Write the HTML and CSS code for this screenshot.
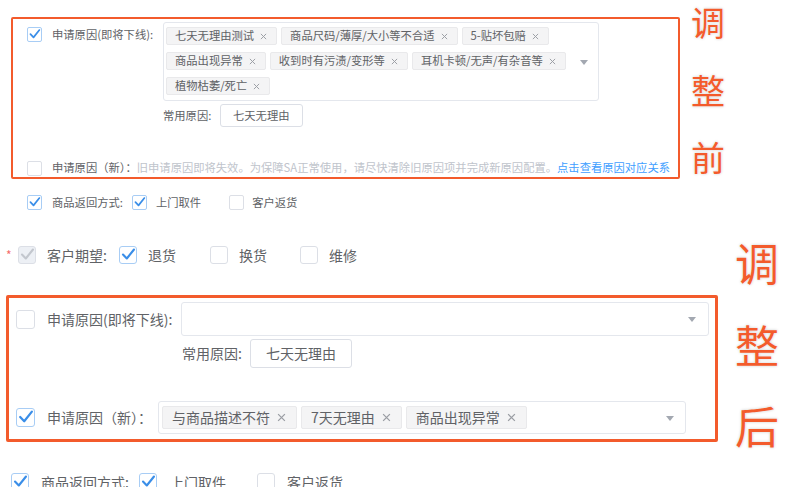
FILE: index.html
```html
<!DOCTYPE html>
<html lang="zh-CN">
<head>
<meta charset="utf-8">
<title>申请原因调整前后</title>
<link rel="stylesheet" href="styles.css">
</head>
<body>
<div class="page">
  <section class="sec-before">
    <div class="box box-before">
      <div class="field">
        <div class="head head-s">
          <span class="cb cb-s checked"><svg viewBox="0 0 16 16"><path d="M3 7.5 L6.8 11.5 L14 2.5"/></svg></span>
          <span class="lbl">申请原因(即将下线):</span>
        </div>
        <div class="select select-s">
          <span class="tag tag-s">七天无理由测试<svg class="x" viewBox="0 0 8 8"><path d="M1 1L7 7M7 1L1 7"/></svg></span>
          <span class="tag tag-s">商品尺码/薄厚/大小等不合适<svg class="x" viewBox="0 0 8 8"><path d="M1 1L7 7M7 1L1 7"/></svg></span>
          <span class="tag tag-s">5-贴坏包赔<svg class="x" viewBox="0 0 8 8"><path d="M1 1L7 7M7 1L1 7"/></svg></span>
          <span class="tag tag-s">商品出现异常<svg class="x" viewBox="0 0 8 8"><path d="M1 1L7 7M7 1L1 7"/></svg></span>
          <span class="tag tag-s">收到时有污渍/变形等<svg class="x" viewBox="0 0 8 8"><path d="M1 1L7 7M7 1L1 7"/></svg></span>
          <span class="tag tag-s">耳机卡顿/无声/有杂音等<svg class="x" viewBox="0 0 8 8"><path d="M1 1L7 7M7 1L1 7"/></svg></span>
          <span class="tag tag-s">植物枯萎/死亡<svg class="x" viewBox="0 0 8 8"><path d="M1 1L7 7M7 1L1 7"/></svg></span>
          <i class="arrow"></i>
        </div>
      </div>
      <div class="common common-s">
        <span class="lbl">常用原因:</span>
        <span class="btn btn-s">七天无理由</span>
      </div>
      <div class="field-new">
        <span class="cb cb-s"><svg viewBox="0 0 16 16"><path d="M3 7.5 L6.8 11.5 L14 2.5"/></svg></span>
        <span class="txt">申请原因（新）：<span class="hint">旧申请原因即将失效。为保障SA正常使用，请尽快清除旧原因项并完成新原因配置。</span><a class="link">点击查看原因对应关系</a></span>
      </div>
    </div>
    <div class="note note-before"><span>调</span><span>整</span><span>前</span></div>
  </section>

  <div class="ret ret-s">
    <span class="cb cb-s checked"><svg viewBox="0 0 16 16"><path d="M3 7.5 L6.8 11.5 L14 2.5"/></svg></span>
    <span class="t1">商品返回方式:</span>
    <span class="cb cb-s checked c2"><svg viewBox="0 0 16 16"><path d="M3 7.5 L6.8 11.5 L14 2.5"/></svg></span>
    <span class="t2">上门取件</span>
    <span class="cb cb-s c3"><svg viewBox="0 0 16 16"><path d="M3 7.5 L6.8 11.5 L14 2.5"/></svg></span>
    <span class="t3">客户返货</span>
  </div>

  <section class="sec-after">
    <div class="after-main">
      <div class="expect">
        <span class="req">*</span>
        <span class="cb cb-m disabled"><svg viewBox="0 0 16 16"><path d="M3 7.5 L6.8 11.5 L14 2.5"/></svg></span>
        <span class="e1">客户期望:</span>
        <span class="cb cb-m checked e2"><svg viewBox="0 0 16 16"><path d="M3 7.5 L6.8 11.5 L14 2.5"/></svg></span>
        <span class="e3">退货</span>
        <span class="cb cb-m e4"><svg viewBox="0 0 16 16"><path d="M3 7.5 L6.8 11.5 L14 2.5"/></svg></span>
        <span class="e3">换货</span>
        <span class="cb cb-m e5"><svg viewBox="0 0 16 16"><path d="M3 7.5 L6.8 11.5 L14 2.5"/></svg></span>
        <span class="e3">维修</span>
      </div>

      <div class="box box-after">
        <div class="field">
          <div class="head head-b1">
            <span class="cb cb-b"><svg viewBox="0 0 16 16"><path d="M3 7.5 L6.8 11.5 L14 2.5"/></svg></span>
            <span class="lbl">申请原因(即将下线):</span>
          </div>
          <div class="select select-b1"><i class="arrow"></i></div>
        </div>
        <div class="common common-b">
          <span class="lbl">常用原因:</span>
          <span class="btn btn-b">七天无理由</span>
        </div>
        <div class="field field-b2">
          <div class="head head-b2">
            <span class="cb cb-b checked"><svg viewBox="0 0 16 16"><path d="M3 7.5 L6.8 11.5 L14 2.5"/></svg></span>
            <span class="lbl">申请原因（新）：</span>
          </div>
          <div class="select select-b2">
            <span class="tag tag-b">与商品描述不符<svg class="x" viewBox="0 0 8 8"><path d="M1 1L7 7M7 1L1 7"/></svg></span>
            <span class="tag tag-b">7天无理由<svg class="x" viewBox="0 0 8 8"><path d="M1 1L7 7M7 1L1 7"/></svg></span>
            <span class="tag tag-b">商品出现异常<svg class="x" viewBox="0 0 8 8"><path d="M1 1L7 7M7 1L1 7"/></svg></span>
            <i class="arrow"></i>
          </div>
        </div>
      </div>

      <div class="clip">
        <div class="ret ret-b">
          <span class="cb cb-m checked"><svg viewBox="0 0 16 16"><path d="M3 7.5 L6.8 11.5 L14 2.5"/></svg></span>
          <span class="t1">商品返回方式:</span>
          <span class="cb cb-m checked c2"><svg viewBox="0 0 16 16"><path d="M3 7.5 L6.8 11.5 L14 2.5"/></svg></span>
          <span class="t2">上门取件</span>
          <span class="cb cb-m c3"><svg viewBox="0 0 16 16"><path d="M3 7.5 L6.8 11.5 L14 2.5"/></svg></span>
          <span class="t3">客户返货</span>
        </div>
      </div>
    </div>
    <div class="note note-after"><span>调</span><span>整</span><span>后</span></div>
  </section>
</div>
</body>
</html>
```

FILE: styles.css
```css
* { box-sizing: border-box; }
html, body { margin: 0; padding: 0; background: #fff; }
body {
  font-family: "Noto Sans CJK SC", "Noto Sans", sans-serif;
  color: #606266;
  line-height: 1.2;
}
.page { width: 787px; height: 501px; overflow: hidden; position: relative; }

/* checkbox */
.cb {
  display: inline-flex; align-items: center; justify-content: center;
  flex: none; background: #fff; border: 1px solid #dcdfe6; border-radius: 2px;
}
.cb svg {
  width: 100%; height: 100%; display: none;
  fill: none; stroke: #3a8ee8; stroke-width: 2.1;
  stroke-linecap: round; stroke-linejoin: round;
}
.cb.checked { border-color: #a8cdf5; }
.cb.checked svg { display: block; }
.cb.disabled { background: #edf0f5; border-color: #dcdfe6; }
.cb.disabled svg { display: block; stroke: #c3c7ce; }
.cb-s { width: 15px; height: 15px; }
.cb-m { width: 18px; height: 18px; border-radius: 3px; }
.cb-b { width: 19px; height: 19px; border-radius: 3px; }

/* red frames */
.box { border-style: solid; border-color: #f35b2c; border-radius: 2px; }

.sec-before { display: flex; align-items: flex-start; }
.box-before {
  margin: 17px 0 0 11px; width: 669px; border-width: 2px;
  padding: 3px 0 1px 14px; font-size: 11.3px;
}
.field { display: flex; align-items: flex-start; }
.head { display: flex; align-items: center; flex: none; }
.lbl { white-space: nowrap; flex: none; }
.head-s { height: 25px; }
.head-s .lbl { margin-left: 10px; width: 111px; }

.select {
  position: relative; flex: none; background: #fff;
  border: 1px solid #e4e7ed; border-radius: 3px;
  display: flex; flex-wrap: wrap; align-content: flex-start;
}
.select-s { width: 436px; height: 79px; padding: 4px 26px 0 2px; gap: 7px 4px; }
.arrow {
  position: absolute; top: 50%; width: 0; height: 0; margin-top: -2px;
  border-left: 4px solid transparent; border-right: 4px solid transparent;
  border-top: 5px solid #a3a8b1;
}
.select-s .arrow { right: 10px; }

.tag {
  display: inline-flex; align-items: center; white-space: nowrap;
  background: #f4f4f5; border: 1px solid #e9e9eb; border-radius: 2px; color: #606266;
}
.x { fill: none; stroke: #9a9da3; stroke-width: 1.1; flex: none; }
.tag-s { height: 18px; padding: 0 9px 0 8px; }
.tag-s .x { width: 7px; height: 7px; margin-left: 6px; }

.common { display: flex; align-items: center; }
.btn {
  display: inline-flex; align-items: center; justify-content: center;
  background: #fff; border: 1px solid #dcdfe6; border-radius: 3px; color: #606266; white-space: nowrap;
}
.common-s { margin: 3px 0 0 136px; }
.common-s .lbl { width: 57px; }
.btn-s { height: 23px; padding: 0 12px; }

.field-new { display: flex; align-items: center; height: 16px; margin-top: 33px; }
.field-new .txt { margin-left: 10px; white-space: nowrap; }
.hint { color: #c0c4cc; }
.link { color: #409eff; }

/* annotations */
.note {
  display: flex; flex-direction: column; color: #f35b2c; line-height: 1;
  text-shadow: 0 0 1px #fff, 0 0 3px rgba(0, 0, 0, 0.22);
}
.note span { display: block; }
.note-before { margin-left: 11px; padding-top: 5px; font-size: 34px; gap: 33.5px; }
.note-after { margin-left: 17px; padding-top: 30px; font-size: 44px; gap: 37.5px; }

/* return rows */
.ret { display: flex; align-items: center; white-space: nowrap; }
.ret-s { height: 15px; margin: 16px 0 0 27px; font-size: 11.3px; }
.ret-s .t1 { margin-left: 10px; }
.ret-s .c2 { margin-left: 9px; }
.ret-s .t2 { margin-left: 9px; }
.ret-s .c3 { margin-left: 28px; }
.ret-s .t3 { margin-left: 8px; }

.sec-after { display: flex; align-items: flex-start; }
.after-main { width: 718px; flex: none; }

.expect { display: flex; align-items: center; height: 18px; margin: 36px 0 0 6px; font-size: 14px; white-space: nowrap; }
.req { width: 12px; color: #f56c6c; font-size: 12px; }
.expect .e1 { margin-left: 11px; }
.expect .e2 { margin-left: 12px; }
.expect .e3 { margin-left: 11px; }
.expect .e4 { margin-left: 34px; }
.expect .e5 { margin-left: 33px; }

.box-after {
  margin: 31px 0 0 6px; width: 712px; border-width: 3px;
  padding: 4px 6px 5px 7px; font-size: 14px;
}
.head-b1 { height: 34px; }
.head-b1 .lbl { margin-left: 12px; width: 134px; }
.select-b1 { width: 528px; height: 34px; }
.select-b1 .arrow { right: 12px; }
.common-b { margin: 3px 0 0 166px; }
.common-b .lbl { width: 68px; }
.btn-b { height: 29px; padding: 0 15px; }
.field-b2 { margin-top: 33px; }
.head-b2 { height: 33px; }
.head-b2 .lbl { margin-left: 12px; width: 111px; }
.select-b2 { width: 528px; height: 33px; padding: 4px 30px 0 3px; gap: 4px; }
.select-b2 .arrow { right: 11px; }
.tag-b { height: 23px; padding: 0 10px 0 9px; }
.tag-b .x { width: 9px; height: 9px; margin-left: 7px; }

.clip { height: 45px; overflow: hidden; }
.ret-b { height: 18px; margin: 31px 0 0 11px; font-size: 14px; }
.ret-b .t1 { margin-left: 12px; }
.ret-b .c2 { margin-left: 10px; }
.ret-b .t2 { margin-left: 13px; }
.ret-b .c3 { margin-left: 31px; }
.ret-b .t3 { margin-left: 12px; }
```
